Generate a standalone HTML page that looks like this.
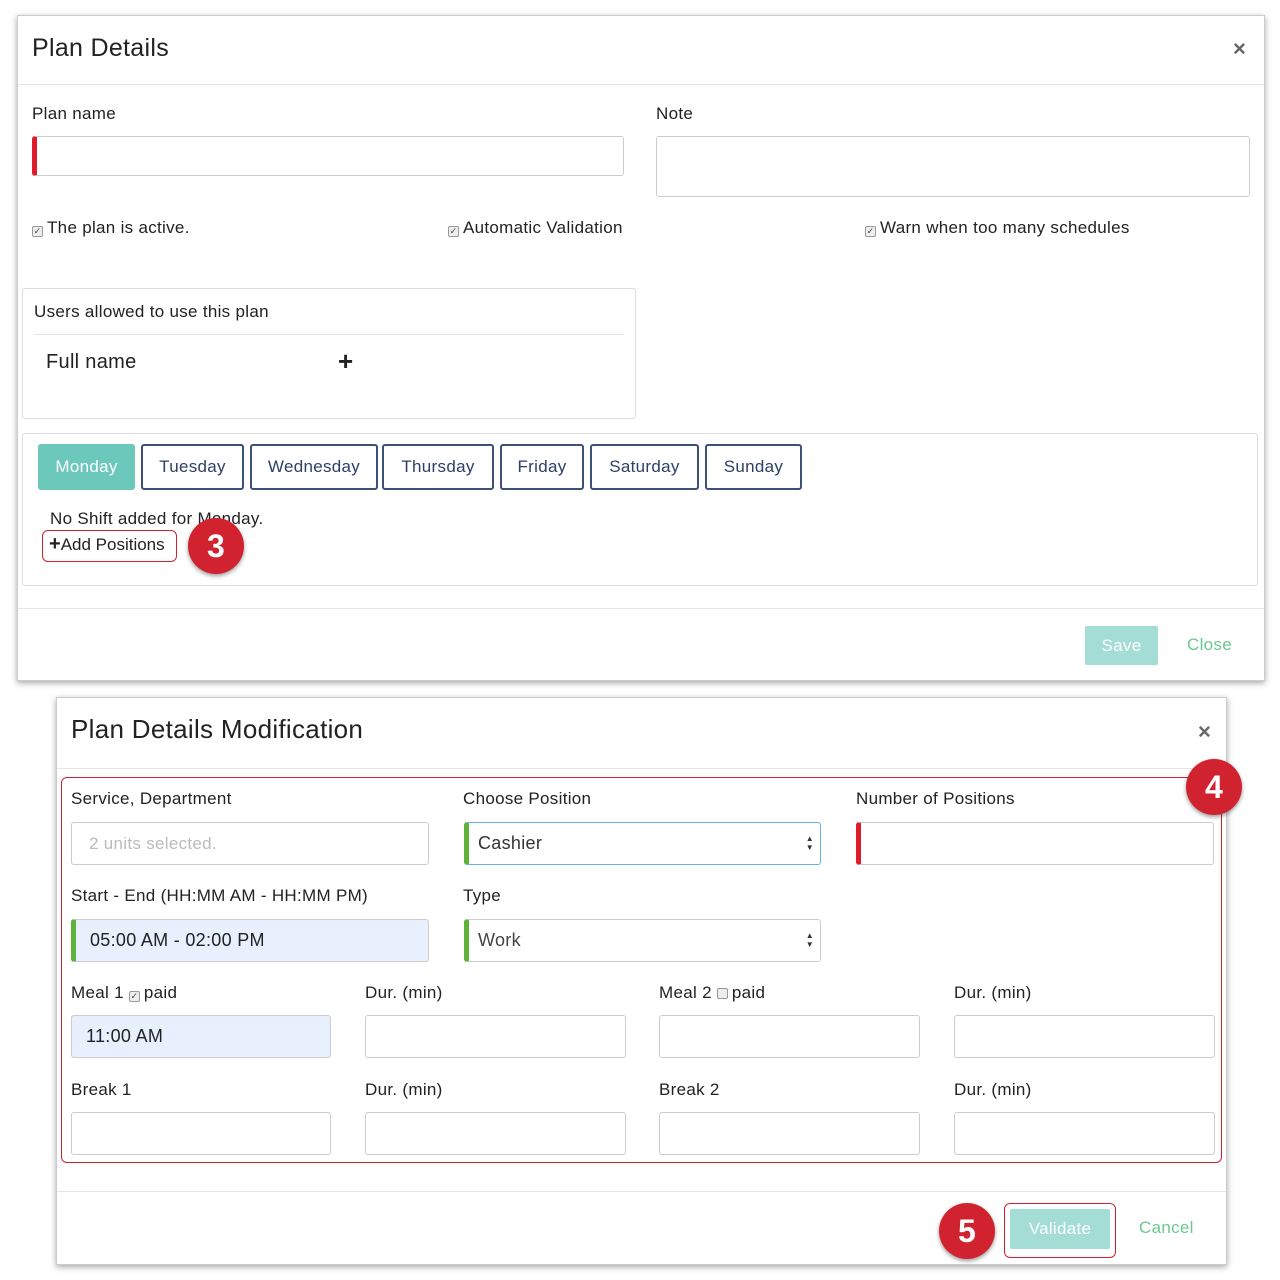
<!DOCTYPE html>
<html><head><style>
*{box-sizing:border-box;margin:0;padding:0}
body{width:1280px;height:1280px;background:#fff;font-family:"Liberation Sans",sans-serif;color:#222;position:relative;overflow:hidden;letter-spacing:.3px}
.a{position:absolute}
.modal{position:absolute;background:#fff;border:1px solid #ccc;box-shadow:0 2px 6px rgba(0,0,0,.35)}
.inp{position:absolute;border:1px solid #ccc;border-radius:3px;background:#fff}
.lbl{position:absolute;font-size:17px;color:#222}
.x{position:absolute;font-size:22px;color:#666;font-weight:bold}
.day{position:absolute;top:444px;height:46px;border:2px solid #3d5078;border-radius:3px;color:#2d3f66;font-size:17px;text-align:center;line-height:42px}
.badge{position:absolute;width:56px;height:56px;border-radius:50%;background:#d1222f;color:#fff;font-weight:bold;font-size:32px;text-align:center;line-height:56px;box-shadow:0 2px 4px rgba(0,0,0,.4)}
.cb{display:inline-block;width:11px;height:11px;border:1px solid #999;border-radius:2px;background:#eee;vertical-align:-1px;margin-right:4px;font-size:9px;line-height:9px;text-align:center;color:#444}
.sel::after{content:"▲\A▼";white-space:pre;position:absolute;right:6px;top:11px;font-size:8px;line-height:9px;color:#333}
</style></head><body>
<div class="modal" style="left:17px;top:15px;width:1248px;height:666px"></div>
<div class="a" style="left:32px;top:34px;font-size:25px">Plan Details</div>
<div class="x" style="left:1233px;top:36px">×</div>
<div class="a" style="left:18px;top:84px;width:1246px;border-top:1px solid #e5e5e5"></div>
<div class="lbl" style="left:32px;top:104px">Plan name</div>
<div class="inp" style="left:32px;top:136px;width:592px;height:40px;border-left:5px solid #e01b2a"></div>
<div class="lbl" style="left:656px;top:104px">Note</div>
<div class="inp" style="left:656px;top:136px;width:594px;height:61px"></div>
<div class="lbl" style="left:32px;top:218px"><span class="cb">✓</span>The plan is active.</div>
<div class="lbl" style="left:448px;top:218px"><span class="cb">✓</span>Automatic Validation</div>
<div class="lbl" style="left:865px;top:218px"><span class="cb">✓</span>Warn when too many schedules</div>
<div class="a" style="left:22px;top:288px;width:614px;height:131px;border:1px solid #ddd;border-radius:3px"></div>
<div class="lbl" style="left:34px;top:302px">Users allowed to use this plan</div>
<div class="a" style="left:34px;top:334px;width:590px;border-top:1px solid #e5e5e5"></div>
<div class="a" style="left:46px;top:351px;font-size:20px">Full name</div>
<div class="a" style="left:338px;top:346px;font-size:26px;font-weight:bold">+</div>
<div class="a" style="left:22px;top:433px;width:1236px;height:153px;border:1px solid #ddd;border-radius:3px"></div>
<div class="day" style="left:38px;width:97px;background:#6cc8bb;border-color:#6cc8bb;color:#fff">Monday</div>
<div class="day" style="left:141px;width:103px">Tuesday</div>
<div class="day" style="left:250px;width:128px">Wednesday</div>
<div class="day" style="left:382px;width:112px">Thursday</div>
<div class="day" style="left:500px;width:84px">Friday</div>
<div class="day" style="left:590px;width:109px">Saturday</div>
<div class="day" style="left:705px;width:97px">Sunday</div>
<div class="lbl" style="left:50px;top:509px">No Shift added for Monday.</div>
<div class="a" style="left:42px;top:530px;width:135px;height:32px;border:1.5px solid #d1222f;border-radius:6px;font-size:17px;padding:4px 0 0 6px;letter-spacing:0"><b style="font-size:20px;line-height:17px">+</b>Add Positions</div>
<div class="badge" style="left:188px;top:518px">3</div>
<div class="a" style="left:18px;top:608px;width:1246px;border-top:1px solid #e5e5e5"></div>
<div class="a" style="left:1085px;top:626px;width:73px;height:39px;background:#a3ddd6;color:#fff;font-size:17px;text-align:center;line-height:39px;border-radius:2px">Save</div>
<div class="a" style="left:1187px;top:635px;color:#6cc88e;font-size:17px">Close</div>

<div class="modal" style="left:56px;top:697px;width:1171px;height:568px"></div>
<div class="a" style="left:71px;top:714px;font-size:26px">Plan Details Modification</div>
<div class="x" style="left:1198px;top:719px">×</div>
<div class="a" style="left:57px;top:768px;width:1169px;border-top:1px solid #e5e5e5"></div>
<div class="a" style="left:61px;top:777px;width:1161px;height:386px;border:1.5px solid #d1222f;border-radius:6px"></div>
<div class="badge" style="left:1186px;top:759px">4</div>
<div class="lbl" style="left:71px;top:789px">Service, Department</div>
<div class="inp" style="left:71px;top:822px;width:358px;height:43px;color:#bbb;font-size:17px;padding:11px 17px">2 units selected.</div>
<div class="lbl" style="left:463px;top:789px">Choose Position</div>
<div class="inp sel" style="left:464px;top:822px;width:357px;height:43px;border-color:#66afe9;border-left:5px solid #5fb33a;font-size:18px;padding:10px 9px;color:#333">Cashier</div>
<div class="lbl" style="left:856px;top:789px">Number of Positions</div>
<div class="inp" style="left:856px;top:822px;width:358px;height:43px;border-left:5px solid #e01b2a"></div>
<div class="lbl" style="left:71px;top:886px">Start - End (HH:MM AM - HH:MM PM)</div>
<div class="inp" style="left:71px;top:919px;width:358px;height:43px;background:#e8f0fe;border-left:5px solid #5fb33a;font-size:18px;padding:10px 14px;color:#222">05:00 AM - 02:00 PM</div>
<div class="lbl" style="left:463px;top:886px">Type</div>
<div class="inp sel" style="left:464px;top:919px;width:357px;height:43px;border-left:5px solid #5fb33a;font-size:18px;padding:10px 9px;color:#444">Work</div>
<div class="lbl" style="left:71px;top:983px">Meal 1 <span class="cb">✓</span>paid</div>
<div class="lbl" style="left:365px;top:983px">Dur. (min)</div>
<div class="lbl" style="left:659px;top:983px">Meal 2 <span class="cb"></span>paid</div>
<div class="lbl" style="left:954px;top:983px">Dur. (min)</div>
<div class="inp" style="left:71px;top:1015px;width:260px;height:43px;background:#e8f0fe;font-size:18px;padding:10px 14px">11:00 AM</div>
<div class="inp" style="left:365px;top:1015px;width:261px;height:43px"></div>
<div class="inp" style="left:659px;top:1015px;width:261px;height:43px"></div>
<div class="inp" style="left:954px;top:1015px;width:261px;height:43px"></div>
<div class="lbl" style="left:71px;top:1080px">Break 1</div>
<div class="lbl" style="left:365px;top:1080px">Dur. (min)</div>
<div class="lbl" style="left:659px;top:1080px">Break 2</div>
<div class="lbl" style="left:954px;top:1080px">Dur. (min)</div>
<div class="inp" style="left:71px;top:1112px;width:260px;height:43px"></div>
<div class="inp" style="left:365px;top:1112px;width:261px;height:43px"></div>
<div class="inp" style="left:659px;top:1112px;width:261px;height:43px"></div>
<div class="inp" style="left:954px;top:1112px;width:261px;height:43px"></div>
<div class="a" style="left:57px;top:1191px;width:1169px;border-top:1px solid #e5e5e5"></div>
<div class="badge" style="left:939px;top:1203px">5</div>
<div class="a" style="left:1004px;top:1203px;width:112px;height:55px;border:1.5px solid #d1222f;border-radius:6px"></div>
<div class="a" style="left:1010px;top:1209px;width:100px;height:40px;background:#a3ddd6;color:#fff;font-size:17px;text-align:center;line-height:40px;border-radius:2px">Validate</div>
<div class="a" style="left:1139px;top:1218px;color:#6cc88e;font-size:17px">Cancel</div>
</body></html>
